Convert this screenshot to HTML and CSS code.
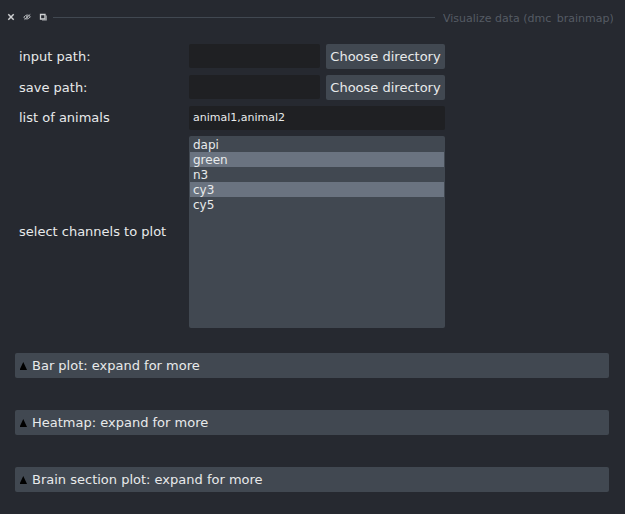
FILE: index.html
```html
<!DOCTYPE html>
<html lang="en"><head><meta charset="utf-8"><title>Visualize data</title><link rel="stylesheet" href="styles.css"></head>
<body>
<header class="titlebar">
<svg class="icons" width="49" height="15" viewBox="0 0 49 15" fill="none" stroke="#d0d2d4">
<path d="M4.300 4.300l5.400 5.400M9.700 4.300l-5.400 5.400" stroke-width="1.500"/>
<path d="M19.700 7.300q3.300-4.300 6.700-.6q-3.300 4.300-6.700.6zM20.500 9.600l5.800-5.200" stroke="#b2b5b9" stroke-width="1"/><circle cx="23" cy="7" r="1" fill="#b2b5b9" stroke="none"/>
<path d="M36.500 4.500h4.500v4.500h-4.500z" stroke-width="1.300"/><path d="M38 10h4.200v-4.500" stroke="#a5a8ac" stroke-width="1.200"/>
</svg>
<div class="rule"></div><span class="title">Visualize data (dmc_brainmap)</span>
</header>
<main>
<form class="form">
<label>input path:</label><div class="row"><div class="field"></div><button type="button">Choose directory</button></div>
<label>save path:</label><div class="row"><div class="field"></div><button type="button">Choose directory</button></div>
<label>list of animals</label><div class="field wide">animal1,animal2</div>
<label>select channels to plot</label>
<ul class="list"><li>dapi</li><li class="on">green</li><li>n3</li><li class="on">cy3</li><li>cy5</li></ul>
</form>
<section class="panels">
<div class="panel"><i class="tri"></i>Bar plot: expand for more</div>
<div class="panel"><i class="tri"></i>Heatmap: expand for more</div>
<div class="panel"><i class="tri"></i>Brain section plot: expand for more</div>
</section>
</main>
</body></html>
```

FILE: styles.css
```css
* { box-sizing: border-box; }
body { margin: 0; width: 625px; height: 514px; overflow: hidden; background: #262930; color: #e8eaeb; font: 13px/16px "DejaVu Sans", sans-serif; }
.titlebar { height: 35px; padding: 0 12px 0 4px; display: flex; align-items: center; }
.icons { flex: none; }
.rule { flex: 1; height: 1px; background: #414851; }
/* The title box is shorter than its line, which cuts off the underscore. */
.title { align-self: flex-start; width: 170px; height: 12px; margin: 12px 0 0 8px; overflow: hidden; font-size: 11px; line-height: 14px; white-space: nowrap; color: #555b64; }
main { padding: 9px 16px 0 15px; }
.form { display: grid; grid-template-columns: 170px 256px; grid-template-rows: 25px 25px 24px 192px; row-gap: 6px; align-items: center; padding-left: 4px; }
.row { display: flex; gap: 6px; }
.field { width: 131px; height: 24px; border-radius: 2px; background: #1f2023; font-size: 11px; line-height: 24px; padding: 0 4px; }
.wide { width: 256px; }
button { flex: 1; height: 25px; padding: 0; border: 0; border-radius: 2px; background: #414851; color: inherit; font: inherit; white-space: nowrap; }
.list { height: 192px; margin: 0; padding: 1px; list-style: none; border-radius: 2px; background: #414851; font-size: 12px; line-height: 17px; }
.list li { height: 15px; padding-left: 3px; }
.list .on { background: #6a7380; }
.panels { display: grid; gap: 32px; margin-top: 25px; }
.panel { height: 25px; display: flex; align-items: center; padding-left: 4px; border-radius: 2px; background: #414851; }
.tri { width: 7.5px; height: 8px; margin: 1px 5px 0 0.5px; background: #000; clip-path: polygon(50% 0, 100% 100%, 0 100%); }
```
